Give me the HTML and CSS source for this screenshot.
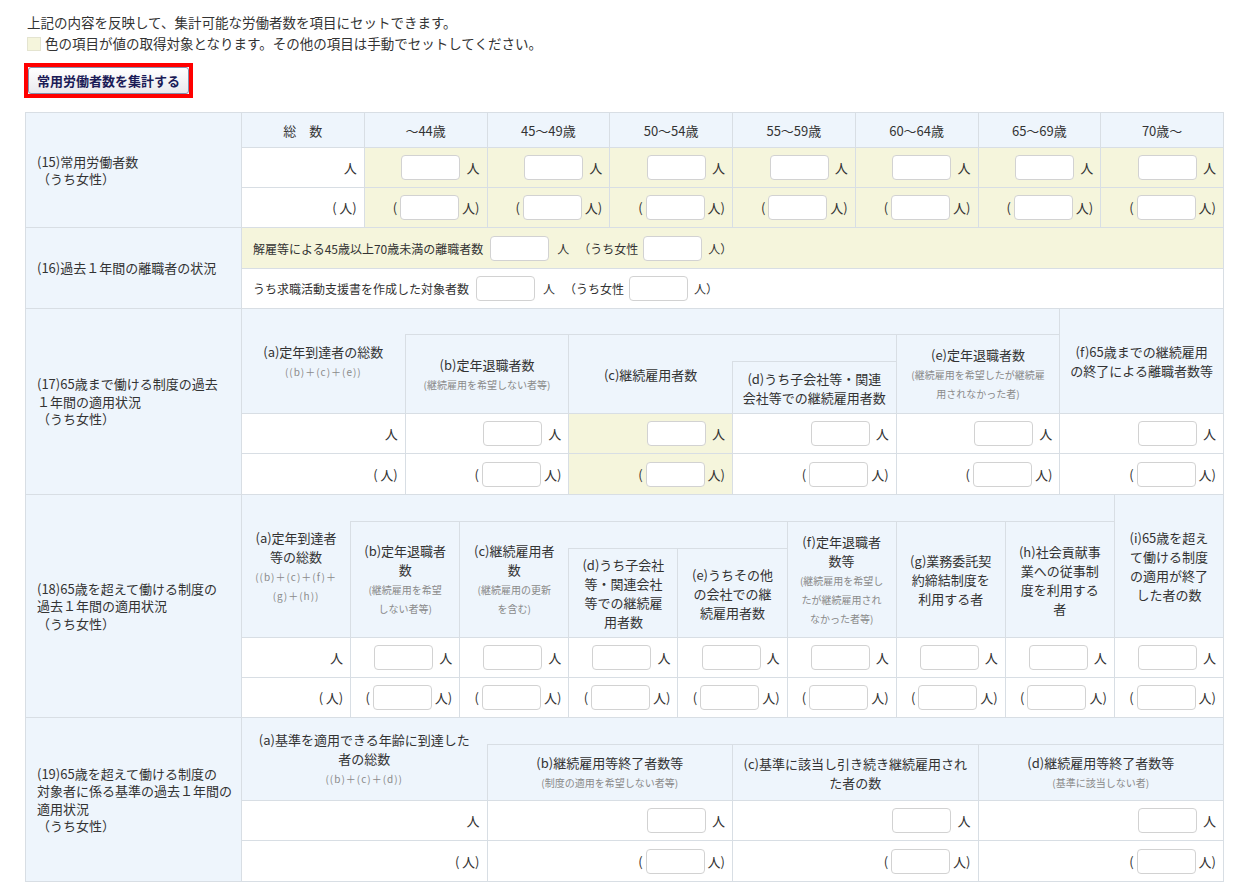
FILE: index.html
```html
<!DOCTYPE html>
<html lang="ja">
<head>
<meta charset="utf-8">
<title>常用労働者数</title>
<link rel="stylesheet" href="styles.css">
</head>
<body>
<div class="intro">
  <p>上記の内容を反映して、集計可能な労働者数を項目にセットできます。</p>
  <p class="legend"><span class="swatch"></span>色の項目が値の取得対象となります。その他の項目は手動でセットしてください。</p>
</div>
<div class="btn-row"><div class="btn-frame"><button class="btn" type="button">常用労働者数を集計する</button></div></div>

<div class="form">
  <!-- (15) -->
  <section class="sec s15">
    <div class="lbl">(15)常用労働者数<br>（うち女性）</div>
    <div class="h">総　数</div>
    <div class="h">～44歳</div>
    <div class="h">45～49歳</div>
    <div class="h">50～54歳</div>
    <div class="h">55～59歳</div>
    <div class="h">60～64歳</div>
    <div class="h">65～69歳</div>
    <div class="h">70歳～</div>

    <div class="c">人</div>
    <div class="c y"><input class="num" type="text"><span class="u">人</span></div>
    <div class="c y"><input class="num" type="text"><span class="u">人</span></div>
    <div class="c y"><input class="num" type="text"><span class="u">人</span></div>
    <div class="c y"><input class="num" type="text"><span class="u">人</span></div>
    <div class="c y"><input class="num" type="text"><span class="u">人</span></div>
    <div class="c y"><input class="num" type="text"><span class="u">人</span></div>
    <div class="c y"><input class="num" type="text"><span class="u">人</span></div>

    <div class="c">(&thinsp;人)</div>
    <div class="c y">(<input class="num p" type="text"><span class="u2">人)</span></div>
    <div class="c y">(<input class="num p" type="text"><span class="u2">人)</span></div>
    <div class="c y">(<input class="num p" type="text"><span class="u2">人)</span></div>
    <div class="c y">(<input class="num p" type="text"><span class="u2">人)</span></div>
    <div class="c y">(<input class="num p" type="text"><span class="u2">人)</span></div>
    <div class="c y">(<input class="num p" type="text"><span class="u2">人)</span></div>
    <div class="c y">(<input class="num p" type="text"><span class="u2">人)</span></div>
  </section>

  <!-- (16) -->
  <section class="sec s16">
    <div class="lbl">(16)過去１年間の離職者の状況</div>
    <div class="line y"><span>解雇等による45歳以上70歳未満の離職者数</span><input class="num m" type="text"><span>人</span><span class="w">（うち女性</span><input class="num m2" type="text"><span>人）</span></div>
    <div class="line"><span>うち求職活動支援書を作成した対象者数</span><input class="num m" type="text"><span>人</span><span class="w">（うち女性</span><input class="num m2" type="text"><span>人）</span></div>
  </section>

  <!-- (17) -->
  <section class="sec s17">
    <div class="lbl">(17)65歳まで働ける制度の過去<br>１年間の適用状況<br>（うち女性）</div>
    <div class="h a17">(a)定年到達者の総数<span class="sub f">((b)＋(c)＋(e))</span></div>
    <div class="h top17"></div>
    <div class="h f17">(f)65歳までの継続雇用<br>の終了による離職者数等</div>
    <div class="h b17">(b)定年退職者数<span class="sub">(継続雇用を希望しない者等)</span></div>
    <div class="h c17">(c)継続雇用者数</div>
    <div class="h blank17"></div>
    <div class="h e17">(e)定年退職者数<span class="sub">(継続雇用を希望したが継続雇<br>用されなかった者)</span></div>
    <div class="h d17">(d)うち子会社等・関連<br>会社等での継続雇用者数</div>

    <div class="c">人</div>
    <div class="c"><input class="num" type="text"><span class="u">人</span></div>
    <div class="c y"><input class="num" type="text"><span class="u">人</span></div>
    <div class="c"><input class="num" type="text"><span class="u">人</span></div>
    <div class="c"><input class="num" type="text"><span class="u">人</span></div>
    <div class="c"><input class="num" type="text"><span class="u">人</span></div>

    <div class="c">(&thinsp;人)</div>
    <div class="c">(<input class="num p" type="text"><span class="u2">人)</span></div>
    <div class="c y">(<input class="num p" type="text"><span class="u2">人)</span></div>
    <div class="c">(<input class="num p" type="text"><span class="u2">人)</span></div>
    <div class="c">(<input class="num p" type="text"><span class="u2">人)</span></div>
    <div class="c">(<input class="num p" type="text"><span class="u2">人)</span></div>
  </section>

  <!-- (18) -->
  <section class="sec s18">
    <div class="lbl">(18)65歳を超えて働ける制度の<br>過去１年間の適用状況<br>（うち女性）</div>
    <div class="h a18">(a)定年到達者<br>等の総数<span class="sub f">((b)＋(c)＋(f)＋<br>(g)＋(h))</span></div>
    <div class="h top18"></div>
    <div class="h i18">(i)65歳を超え<br>て働ける制度<br>の適用が終了<br>した者の数</div>
    <div class="h b18">(b)定年退職者<br>数<span class="sub">(継続雇用を希望<br>しない者等)</span></div>
    <div class="h c18">(c)継続雇用者<br>数<span class="sub">(継続雇用の更新<br>を含む)</span></div>
    <div class="h blank18"></div>
    <div class="h f18">(f)定年退職者<br>数等<span class="sub">(継続雇用を希望し<br>たが継続雇用され<br>なかった者等)</span></div>
    <div class="h g18">(g)業務委託契<br>約締結制度を<br>利用する者</div>
    <div class="h h18">(h)社会貢献事<br>業への従事制<br>度を利用する<br>者</div>
    <div class="h d18">(d)うち子会社<br>等・関連会社<br>等での継続雇<br>用者数</div>
    <div class="h e18">(e)うちその他<br>の会社での継<br>続雇用者数</div>

    <div class="c">人</div>
    <div class="c"><input class="num" type="text"><span class="u">人</span></div>
    <div class="c"><input class="num" type="text"><span class="u">人</span></div>
    <div class="c"><input class="num" type="text"><span class="u">人</span></div>
    <div class="c"><input class="num" type="text"><span class="u">人</span></div>
    <div class="c"><input class="num" type="text"><span class="u">人</span></div>
    <div class="c"><input class="num" type="text"><span class="u">人</span></div>
    <div class="c"><input class="num" type="text"><span class="u">人</span></div>
    <div class="c"><input class="num" type="text"><span class="u">人</span></div>

    <div class="c">(&thinsp;人)</div>
    <div class="c">(<input class="num p" type="text"><span class="u2">人)</span></div>
    <div class="c">(<input class="num p" type="text"><span class="u2">人)</span></div>
    <div class="c">(<input class="num p" type="text"><span class="u2">人)</span></div>
    <div class="c">(<input class="num p" type="text"><span class="u2">人)</span></div>
    <div class="c">(<input class="num p" type="text"><span class="u2">人)</span></div>
    <div class="c">(<input class="num p" type="text"><span class="u2">人)</span></div>
    <div class="c">(<input class="num p" type="text"><span class="u2">人)</span></div>
    <div class="c">(<input class="num p" type="text"><span class="u2">人)</span></div>
  </section>

  <!-- (19) -->
  <section class="sec s19">
    <div class="lbl">(19)65歳を超えて働ける制度の<br>対象者に係る基準の過去１年間の<br>適用状況<br>（うち女性）</div>
    <div class="h a19">(a)基準を適用できる年齢に到達した<br>者の総数<span class="sub f">((b)＋(c)＋(d))</span></div>
    <div class="h top19"></div>
    <div class="h b19">(b)継続雇用等終了者数等<span class="sub">(制度の適用を希望しない者等)</span></div>
    <div class="h c19">(c)基準に該当し引き続き継続雇用され<br>た者の数</div>
    <div class="h d19">(d)継続雇用等終了者数等<span class="sub">(基準に該当しない者)</span></div>

    <div class="c">人</div>
    <div class="c"><input class="num" type="text"><span class="u">人</span></div>
    <div class="c"><input class="num" type="text"><span class="u">人</span></div>
    <div class="c"><input class="num" type="text"><span class="u">人</span></div>

    <div class="c">(&thinsp;人)</div>
    <div class="c">(<input class="num p" type="text"><span class="u2">人)</span></div>
    <div class="c">(<input class="num p" type="text"><span class="u2">人)</span></div>
    <div class="c">(<input class="num p" type="text"><span class="u2">人)</span></div>
  </section>
</div>
</body>
</html>
```

FILE: styles.css
```css
* { box-sizing: border-box; }

body {
  margin: 0;
  font-family: "Noto Sans CJK JP", "Noto Sans", sans-serif;
  color: #333;
  background: #fff;
}

.intro {
  padding: 12px 0 0 27px;
  font-size: 13.5px;
  line-height: 21px;
}
.intro p { margin: 0; }
.legend { display: flex; align-items: center; }
.swatch {
  width: 14px;
  height: 14px;
  background: #f5f5dc;
  border: 1px solid #e4e4d0;
  margin-right: 4px;
}

.btn-row { display: flex; padding: 9px 0 0 24px; }
.btn-frame { display: flex; border: 4px solid #f00; }
.btn {
  width: 161px;
  height: 27px;
  padding: 0;
  border: 1px solid #8390ad;
  border-radius: 3px;
  background: linear-gradient(#ffffff, #e9e9ee);
  font-family: "Noto Sans CJK JP", sans-serif;
  font-size: 13px;
  font-weight: 700;
  color: #1b1b57;
  line-height: 25px;
}

.form {
  margin: 14px 0 0 25px;
  width: 1199px;
  padding: 1px;
  background: #d8dee4;
  display: flex;
  flex-direction: column;
  gap: 1px;
  font-size: 13px;
}

.sec { display: grid; gap: 1px; }
.s15 { grid-template-columns: 215px repeat(8, minmax(0, 1fr)); grid-template-rows: 34px 39px 39px; }
.s16 { grid-template-columns: 215px minmax(0, 1fr); grid-template-rows: 40px 39px; }
.s17 { grid-template-columns: 215px repeat(6, minmax(0, 1fr)); grid-template-rows: 25px 26px 51px 39px 40px; }
.s18 { grid-template-columns: 215px repeat(9, minmax(0, 1fr)); grid-template-rows: 26px 26px 88px 39px 39px; }
.s19 { grid-template-columns: 215px repeat(4, minmax(0, 1fr)); grid-template-rows: 26px 55px 39px 40px; }

.lbl {
  grid-column: 1;
  grid-row: 1 / -1;
  background: #eef5fc;
  display: flex;
  flex-direction: column;
  justify-content: center;
  padding-left: 11px;
  line-height: 17.5px;
  white-space: nowrap;
}

.h {
  background: #eef5fc;
  display: flex;
  flex-direction: column;
  justify-content: center;
  align-items: center;
  text-align: center;
  line-height: 19px;
  white-space: nowrap;
  padding: 0 2px;
}
.sub {
  display: block;
  font-size: 10px;
  line-height: 19px;
  color: #8a8a8a;
  margin-top: 1px;
}
.sub.f { letter-spacing: 1px; }

.c {
  background: #fff;
  display: flex;
  justify-content: flex-end;
  align-items: center;
  padding-right: 7px;
  white-space: nowrap;
}
.y { background: #f5f5dc; }

.num {
  width: 59px;
  height: 25px;
  border: 1px solid #d2d2d2;
  border-radius: 4px;
  background: #fff;
  padding: 0 4px;
  font: inherit;
}
.num.p { margin-left: 3px; }
.u { margin-left: 6px; }
.u2 { margin-left: 3px; }

.line {
  background: #fff;
  display: flex;
  align-items: center;
  padding-left: 11px;
  white-space: nowrap;
  font-size: 12px;
}
.line.y { background: #f5f5dc; }
.line .m { margin: 0 8px 0 7px; }
.line .m2 { margin: 0 6px 0 5px; }
.line .w { margin-left: 9px; }

/* (17) header placement */
.a17 { grid-column: 2; grid-row: 1 / 4; }
.top17 { grid-column: 3 / 7; grid-row: 1; margin-left: -1px; }
.f17 { grid-column: 7; grid-row: 1 / 4; }
.b17 { grid-column: 3; grid-row: 2 / 4; }
.c17 { grid-column: 4; grid-row: 2 / 4; }
.blank17 { grid-column: 5; grid-row: 2; margin-left: -1px; }
.e17 { grid-column: 6; grid-row: 2 / 4; }
.d17 { grid-column: 5; grid-row: 3; }

/* (18) header placement */
.a18 { grid-column: 2; grid-row: 1 / 4; }
.top18 { grid-column: 3 / 10; grid-row: 1; margin-left: -1px; }
.i18 { grid-column: 10; grid-row: 1 / 4; }
.b18 { grid-column: 3; grid-row: 2 / 4; }
.c18 { grid-column: 4; grid-row: 2 / 4; }
.blank18 { grid-column: 5 / 7; grid-row: 2; margin-left: -1px; }
.f18 { grid-column: 7; grid-row: 2 / 4; }
.g18 { grid-column: 8; grid-row: 2 / 4; }
.h18 { grid-column: 9; grid-row: 2 / 4; }
.d18 { grid-column: 5; grid-row: 3; }
.e18 { grid-column: 6; grid-row: 3; }

/* (19) header placement */
.a19 { grid-column: 2; grid-row: 1 / 3; }
.top19 { grid-column: 3 / 6; grid-row: 1; margin-left: -1px; }
.b19 { grid-column: 3; grid-row: 2; }
.c19 { grid-column: 4; grid-row: 2; }
.d19 { grid-column: 5; grid-row: 2; }
```
